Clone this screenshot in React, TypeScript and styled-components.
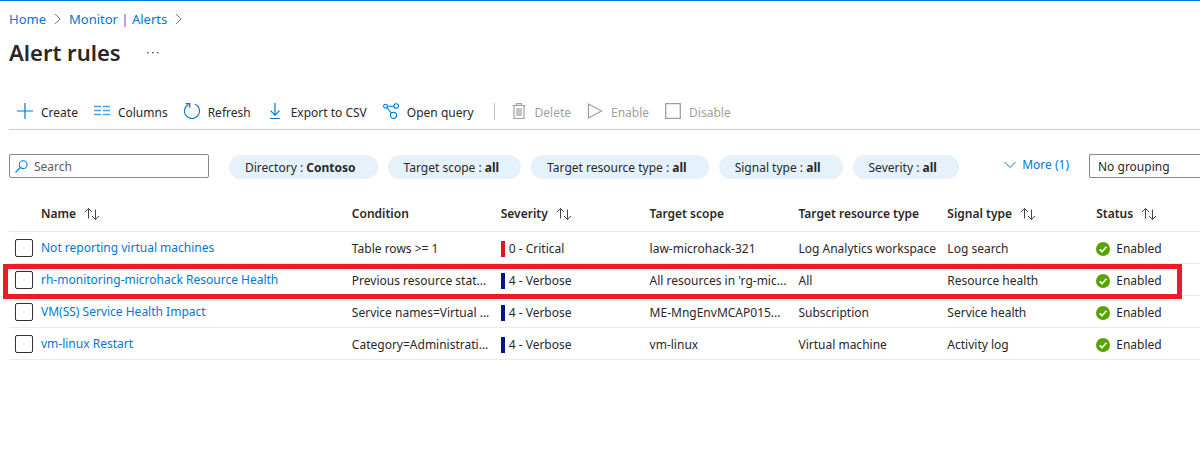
import React from "react";
import styled, { createGlobalStyle } from "styled-components";

const GlobalStyle = createGlobalStyle`
  * { box-sizing: border-box; }
  body {
    margin: 0;
    background: #ffffff;
    color: #292827;
    font-family: "Noto Sans", "Open Sans", sans-serif;
    font-size: 12px;
    line-height: 16px;
  }
  button, input, select { font: inherit; color: inherit; margin: 0; }
  svg { flex: none; }
`;

const Page = styled.main`
  border-top: 1px solid #0078d4;
  padding-left: 9px;
  overflow-x: hidden;
`;

const Breadcrumb = styled.nav`
  display: flex;
  align-items: center;
  gap: 8px;
  height: 36px;
  font-size: 13px;
`;

const Link = styled.a`
  color: #0078d4;
  text-decoration: none;
  white-space: nowrap;
`;

const TitleRow = styled.header`
  display: flex;
  align-items: center;
  gap: 24px;
  height: 32px;
`;

const Title = styled.h1`
  margin: 0;
  padding-bottom: 2px;
  font-size: 22px;
  line-height: 30px;
  font-weight: 600;
`;

const IconButton = styled.button`
  display: flex;
  padding: 0;
  border: 0;
  background: none;
`;

const Toolbar = styled.div`
  display: flex;
  align-items: center;
  height: 37px;
  margin-top: 24px;
  border-bottom: 1px solid #cccccc;
`;

const ToolButton = styled.button`
  display: flex;
  align-items: center;
  gap: 8px;
  padding: 0 8px;
  border: 0;
  background: none;
  white-space: nowrap;

  &:disabled { color: #a19f9d; }
`;

const ToolLabel = styled.span`
  padding-top: 3px;
`;

const Separator = styled.span`
  width: 1px;
  height: 17px;
  margin: 0 8px 0 12px;
  background: #c8c6c4;
`;

const Filters = styled.div`
  display: flex;
  align-items: center;
  height: 24px;
  margin-top: 24px;
`;

const SearchBox = styled.label`
  display: flex;
  align-items: center;
  gap: 6px;
  flex: none;
  width: 200px;
  height: 24px;
  padding: 0 5px;
  border: 1px solid #8a8886;
  border-radius: 2px;
`;

const SearchInput = styled.input`
  flex: 1;
  min-width: 0;
  padding: 2px 0 0;
  border: 0;
  outline: 0;
  background: none;

  &::placeholder { color: #605e5c; opacity: 1; }
`;

const Pills = styled.div`
  display: flex;
  gap: 10px;
  margin: 2px 0 0 20px;
`;

const Pill = styled.button`
  height: 24px;
  padding: 2px 22px 0 16px;
  border: 0;
  border-radius: 12px;
  background: #e5f1fb;
  white-space: nowrap;
`;

const MoreButton = styled.button`
  display: flex;
  align-items: center;
  gap: 6px;
  margin: 0 20px 2px auto;
  padding: 0;
  border: 0;
  background: none;
  color: #0078d4;
  white-space: nowrap;
`;

const Grouping = styled.select`
  appearance: none;
  flex: none;
  width: 111px;
  height: 24px;
  padding: 2px 8px 0;
  border: 1px solid #8a8886;
  border-right: 0;
  border-radius: 2px 0 0 2px;
  background: #ffffff;
`;

const Table = styled.table`
  width: 100%;
  margin-top: 18px;
  table-layout: fixed;
  border-collapse: separate;
  border-spacing: 0;
`;

const Column = styled.col<{ $width?: string }>`
  width: ${(p) => p.$width ?? "auto"};
`;

const HeadCell = styled.th`
  height: 36px;
  padding: 0;
  border-bottom: 1px solid #e6e6e6;
  font-weight: 600;
  text-align: left;
  white-space: nowrap;
`;

const HeadLabel = styled.span`
  display: flex;
  align-items: center;
  gap: 8px;
`;

const Row = styled.tr`
  position: relative;
`;

const Cell = styled.td`
  height: 32px;
  padding: 2px 0 0;
  border-bottom: 1px solid #edebe9;
  white-space: nowrap;
`;

const NameCell = styled(Cell)`
  padding: 0;
`;

const Marker = styled.span`
  position: absolute;
  inset: 0 18px -3px -6px;
  border: 5px solid #ed1c24;
  pointer-events: none;
`;

const Checkbox = styled.input`
  appearance: none;
  display: block;
  width: 18px;
  height: 18px;
  margin: 1px 0 0 6px;
  border: 1px solid #323130;
  border-radius: 2px;
  background: #ffffff;

  &:checked { background: #0078d4; }
`;

const Severity = styled.span<{ $color: string }>`
  display: block;
  padding-left: 4px;
  border-left: 4px solid ${(p) => p.$color};
`;

const Status = styled.span`
  display: flex;
  align-items: center;
  gap: 6px;
`;

const Svg = ({ size = 16, children }: { size?: number; children: React.ReactNode }) => (
  <svg width={size} height={size} viewBox={`0 0 ${size} ${size}`} fill="none" aria-hidden="true">
    {children}
  </svg>
);

const BLUE = "#0078d4";
const GRAY = "#a19f9d";

const Crumb = () => (
  <svg width="7" height="12" viewBox="0 0 7 12" fill="none" aria-hidden="true">
    <path d="M1 1l5 5-5 5" stroke="#797775" />
  </svg>
);

const SortIcon = () => (
  <svg width="16" height="14" viewBox="0 0 16 14" fill="none" stroke="#484644" aria-hidden="true">
    <path d="M4.500 11.500v-10M1 5l3.500-3.500L8 5M11.500 2.500v10M8 9l3.500 3.500L15 9" />
  </svg>
);

const icons = {
  create: <Svg><path d="M8 0v16M0 8h16" stroke={BLUE} strokeWidth="1.200" /></Svg>,
  columns: (
    <Svg>
      <path d="M0 3.500h7M9 3.500h7M0 7.500h7M9 7.500h7M0 11.500h7M9 11.500h7" stroke="#4ea0e2" strokeWidth="1.300" />
    </Svg>
  ),
  refresh: (
    <Svg>
      <path d="M10.800 1.100A7.500 7.500 0 1 1 4.500 1.400" stroke={BLUE} strokeWidth="1.100" />
      <path d="M1.500 .6h4.200v4.200" stroke={BLUE} strokeWidth="1.200" />
    </Svg>
  ),
  export: <Svg><path d="M8 0v12M3.500 7.700L8 12.200l4.500-4.500M3 15.500h10" stroke={BLUE} strokeWidth="1.200" /></Svg>,
  query: (
    <Svg>
      <g stroke={BLUE} strokeWidth="1.100">
        <circle cx="2.500" cy="3.200" r="1.900" />
        <circle cx="13.200" cy="3" r="2.300" />
        <circle cx="10.500" cy="12.300" r="3.100" />
        <path d="M4.400 3.200h6.500M3.800 4.600l4.600 5.400" />
      </g>
    </Svg>
  ),
  remove: (
    <Svg>
      <path d="M1.500 2.500h13M5.500 2.500V.7h5v1.800M3 2.500v13h10v-13" stroke={GRAY} strokeWidth="1.200" />
      <path d="M5 5h6v8H5z" fill="#c8c6c4" />
    </Svg>
  ),
  enable: <Svg><path d="M1.500 1l13 7-13 7z" stroke={GRAY} strokeWidth="1.200" /></Svg>,
  disable: <Svg><path d="M.7 .7h14.600v14.600H.7z" stroke={GRAY} strokeWidth="1.300" /></Svg>,
};

const SearchIcon = () => (
  <Svg size={13}>
    <circle cx="8.200" cy="4.700" r="3.900" stroke={BLUE} strokeWidth="1.100" />
    <path d="M5.400 7.500L.5 12.400" stroke={BLUE} strokeWidth="1.200" />
  </Svg>
);

const CheckIcon = () => (
  <Svg size={14}>
    <circle cx="7" cy="7" r="7" fill="#57a300" />
    <path d="M3.700 7.300l2.300 2.400 4.400-5" stroke="#ffffff" strokeWidth="1.700" />
  </Svg>
);

const actions = [
  { label: "Create", icon: icons.create },
  { label: "Columns", icon: icons.columns },
  { label: "Refresh", icon: icons.refresh },
  { label: "Export to CSV", icon: icons.export },
  { label: "Open query", icon: icons.query },
];

const rowActions = [
  { label: "Delete", icon: icons.remove },
  { label: "Enable", icon: icons.enable },
  { label: "Disable", icon: icons.disable },
];

const filters = [
  ["Directory", "Contoso"],
  ["Target scope", "all"],
  ["Target resource type", "all"],
  ["Signal type", "all"],
  ["Severity", "all"],
];

const columns = [
  { label: "Name", sortable: true, width: "26.1%" },
  { label: "Condition", width: "12.5%" },
  { label: "Severity", sortable: true, width: "12.5%" },
  { label: "Target scope", width: "12.5%" },
  { label: "Target resource type", width: "12.5%" },
  { label: "Signal type", sortable: true, width: "12.5%" },
  { label: "Status", sortable: true },
];

const CRITICAL = "#e81123";
const VERBOSE = "#00188f";

const rules = [
  {
    name: "Not reporting virtual machines",
    condition: "Table rows >= 1",
    severity: "0 - Critical",
    color: CRITICAL,
    scope: "law-microhack-321",
    type: "Log Analytics workspace",
    signal: "Log search",
  },
  {
    name: "rh-monitoring-microhack Resource Health",
    condition: "Previous resource stat...",
    severity: "4 - Verbose",
    color: VERBOSE,
    scope: "All resources in 'rg-mic...",
    type: "All",
    signal: "Resource health",
    marked: true,
  },
  {
    name: "VM(SS) Service Health Impact",
    condition: "Service names=Virtual ...",
    severity: "4 - Verbose",
    color: VERBOSE,
    scope: "ME-MngEnvMCAP015...",
    type: "Subscription",
    signal: "Service health",
  },
  {
    name: "vm-linux Restart",
    condition: "Category=Administrati...",
    severity: "4 - Verbose",
    color: VERBOSE,
    scope: "vm-linux",
    type: "Virtual machine",
    signal: "Activity log",
  },
];

export default function App() {
  return (
    <>
      <GlobalStyle />
      <Page>
        <Breadcrumb aria-label="Breadcrumb">
          <Link href="#home">Home</Link>
          <Crumb />
          <Link href="#alerts">Monitor | Alerts</Link>
          <Crumb />
        </Breadcrumb>
        <TitleRow>
          <Title>Alert rules</Title>
          <IconButton type="button" aria-label="More options">
            <Svg>
              <path d="M2 7h1.500v1.500H2zM7 7h1.500v1.500H7zM12 7h1.500v1.500H12z" fill="#605e5c" />
            </Svg>
          </IconButton>
        </TitleRow>
        <Toolbar>
          {actions.map((a) => (
            <ToolButton type="button" key={a.label}>
              {a.icon}
              <ToolLabel>{a.label}</ToolLabel>
            </ToolButton>
          ))}
          <Separator />
          {rowActions.map((a) => (
            <ToolButton type="button" key={a.label} disabled>
              {a.icon}
              <ToolLabel>{a.label}</ToolLabel>
            </ToolButton>
          ))}
        </Toolbar>
        <Filters>
          <SearchBox>
            <SearchIcon />
            <SearchInput type="text" placeholder="Search" aria-label="Search" />
          </SearchBox>
          <Pills>
            {filters.map(([name, value]) => (
              <Pill type="button" key={name}>
                {name} : <b>{value}</b>
              </Pill>
            ))}
          </Pills>
          <MoreButton type="button">
            <svg width="12" height="8" viewBox="0 0 12 8" fill="none" aria-hidden="true">
              <path d="M.5 1L6 6.500 11.500 1" stroke={BLUE} />
            </svg>
            More (1)
          </MoreButton>
          <Grouping aria-label="Grouping">
            <option>No grouping</option>
          </Grouping>
        </Filters>
        <Table>
          <colgroup>
            <Column $width="32px" />
            {columns.map((c) => (
              <Column key={c.label} $width={c.width} />
            ))}
          </colgroup>
          <thead>
            <tr>
              <HeadCell />
              {columns.map((c) => (
                <HeadCell key={c.label} scope="col">
                  <HeadLabel>
                    {c.label}
                    {c.sortable && <SortIcon />}
                  </HeadLabel>
                </HeadCell>
              ))}
            </tr>
          </thead>
          <tbody>
            {rules.map((r) => (
              <Row key={r.name}>
                <NameCell>
                  <Checkbox type="checkbox" aria-label={`Select ${r.name}`} />
                  {r.marked && <Marker />}
                </NameCell>
                <NameCell>
                  <Link href="#rule">{r.name}</Link>
                </NameCell>
                <Cell>{r.condition}</Cell>
                <Cell>
                  <Severity $color={r.color}>{r.severity}</Severity>
                </Cell>
                <Cell>{r.scope}</Cell>
                <Cell>{r.type}</Cell>
                <Cell>{r.signal}</Cell>
                <Cell>
                  <Status>
                    <CheckIcon />
                    Enabled
                  </Status>
                </Cell>
              </Row>
            ))}
          </tbody>
        </Table>
      </Page>
    </>
  );
}
